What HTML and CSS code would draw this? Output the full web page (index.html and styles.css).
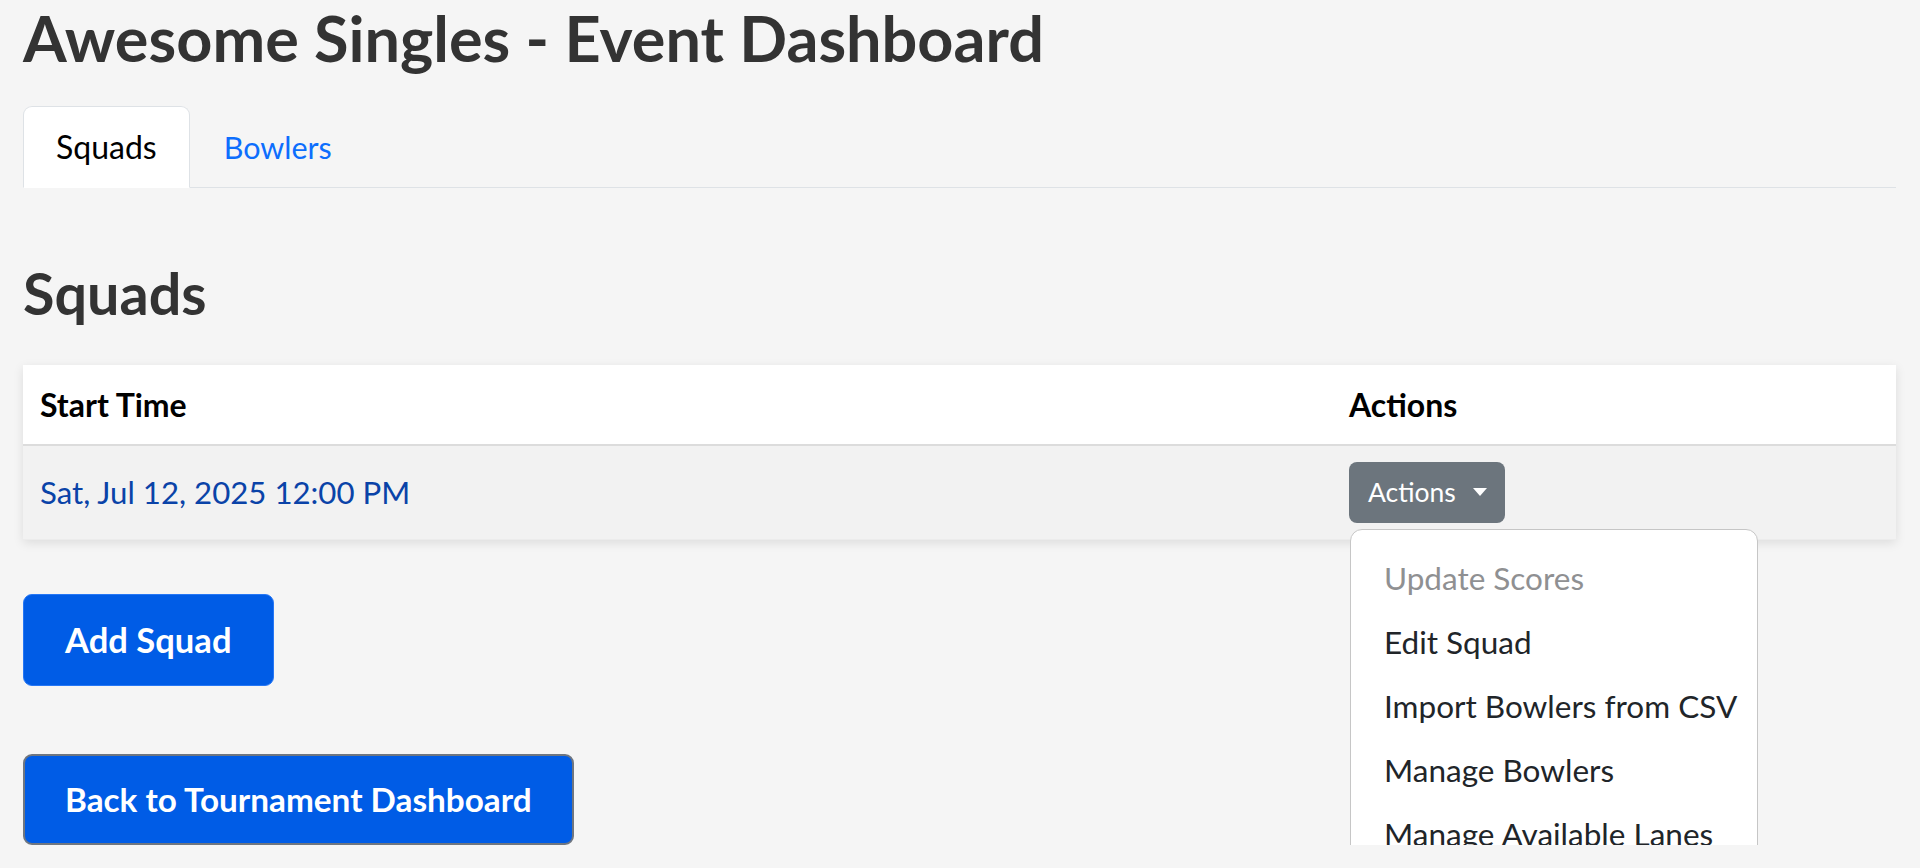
FILE: index.html
```html
<!DOCTYPE html>
<html lang="en">
<head>
<meta charset="utf-8">
<title>Awesome Singles - Event Dashboard</title>
<link rel="stylesheet" href="styles.css">
</head>
<body>
<div class="page">
  <h1 class="title">Awesome Singles - Event Dashboard</h1>
  <nav class="tabs">
    <a class="tab active" href="#">Squads</a>
    <a class="tab tab-second" href="#">Bowlers</a>
  </nav>
  <h2 class="section-title">Squads</h2>
  <table class="squads">
    <thead>
      <tr>
        <th class="col-time">Start Time</th>
        <th>Actions</th>
      </tr>
    </thead>
    <tbody>
      <tr>
        <td><a class="date-link" href="#">Sat, Jul 12, 2025 12:00 PM</a></td>
        <td>
          <div class="dropdown">
            <button class="btn-actions" type="button">Actions<span class="caret"></span></button>
            <ul class="menu">
              <li class="menu-item disabled">Update Scores</li>
              <li class="menu-item">Edit Squad</li>
              <li class="menu-item">Import Bowlers from CSV</li>
              <li class="menu-item">Manage Bowlers</li>
              <li class="menu-item">Manage Available Lanes</li>
            </ul>
          </div>
        </td>
      </tr>
    </tbody>
  </table>
  <div class="buttons">
    <button class="btn-primary btn-add" type="button">Add Squad</button>
    <button class="btn-primary btn-back" type="button">Back to Tournament Dashboard</button>
  </div>
</div>
</body>
</html>
```
FILE: styles.css
```css
html, body {
  margin: 0;
  padding: 0;
  background: #f5f5f5;
  overflow: hidden;
}
body {
  font-family: Lato, "Liberation Sans", sans-serif;
  font-size: 32px;
  color: #212529;
}
.page {
  padding: 0 24px 0 23px;
}
.title {
  margin: 0 0 30px 0;
  font-size: 63px;
  line-height: 1.2;
  font-weight: 700;
  color: #333333;
}
.tabs {
  display: flex;
  border-bottom: 1px solid #dee2e6;
}
.tab {
  display: block;
  padding: 16px 32px;
  line-height: 48px;
  font-size: 32px;
  color: #0d6efd;
  text-decoration: none;
  border: 1px solid transparent;
  border-top-left-radius: 9px;
  border-top-right-radius: 9px;
  margin-bottom: -1px;
}
.tab.active {
  color: #000;
  background: #fff;
  border-color: #dee2e6 #dee2e6 #fff;
}
.tab-second {
  margin-left: 1px;
  font-size: 30.5px;
}
.section-title {
  margin: 70px 0 38px 0;
  font-size: 57.5px;
  line-height: 1.2;
  font-weight: 700;
  color: #333333;
}
.squads {
  width: 100%;
  border-collapse: collapse;
  background: #fff;
  box-shadow: 0 3px 10px rgba(0, 0, 0, 0.1);
}
.squads th {
  text-align: left;
  font-weight: 700;
  color: #000;
  padding: 16px 16px 15px 17px;
  line-height: 48px;
  border-bottom: 2px solid #dcdcdc;
  background: #fff;
}
.col-time {
  width: 1276px;
}
.squads td {
  padding: 16px 16px 16px 17px;
  line-height: 48px;
  background: #f2f2f2;
  border-bottom: 1px solid #ececec;
  vertical-align: middle;
}
.date-link {
  color: #0a43a8;
  text-decoration: none;
  font-size: 31.2px;
}
.dropdown {
  position: relative;
  display: inline-block;
  vertical-align: middle;
}
.btn-actions {
  display: flex;
  align-items: center;
  height: 61px;
  padding: 0 18px 0 19px;
  font-family: Lato, "Liberation Sans", sans-serif;
  font-size: 26.5px;
  line-height: 61px;
  color: #fff;
  background: #6c757d;
  border: 0;
  border-radius: 8px;
}
.caret {
  display: inline-block;
  margin-left: 17px;
  width: 0;
  height: 0;
  border-top: 8px solid #fff;
  border-left: 7px solid transparent;
  border-right: 7px solid transparent;
}
.menu {
  position: absolute;
  top: 67px;
  left: 1px;
  width: 406px;
  margin: 0;
  padding: 16px 0;
  list-style: none;
  background: #fff;
  border: 1.5px solid #c6c6c6;
  border-radius: 12px;
  z-index: 10;
}
.menu-item {
  padding: 8px 33px;
  line-height: 48px;
  font-size: 31.5px;
  color: #212529;
  white-space: nowrap;
}
.menu-item.disabled {
  color: #8f9092;
}
.buttons {
  display: flex;
  flex-direction: column;
  align-items: flex-start;
  gap: 68px;
  margin-top: 54px;
}
.btn-primary {
  font-family: Lato, "Liberation Sans", sans-serif;
  font-weight: 700;
  line-height: 51px;
  color: #fff;
  background: #005ce6;
  border-radius: 9px;
}
.btn-add {
  font-size: 34.6px;
  padding: 19.5px 41px;
  border: 1px solid #2677f5;
}
.btn-back {
  font-size: 33.3px;
  padding: 18px 40px;
  border: 2px solid #6f7680;
}
```
